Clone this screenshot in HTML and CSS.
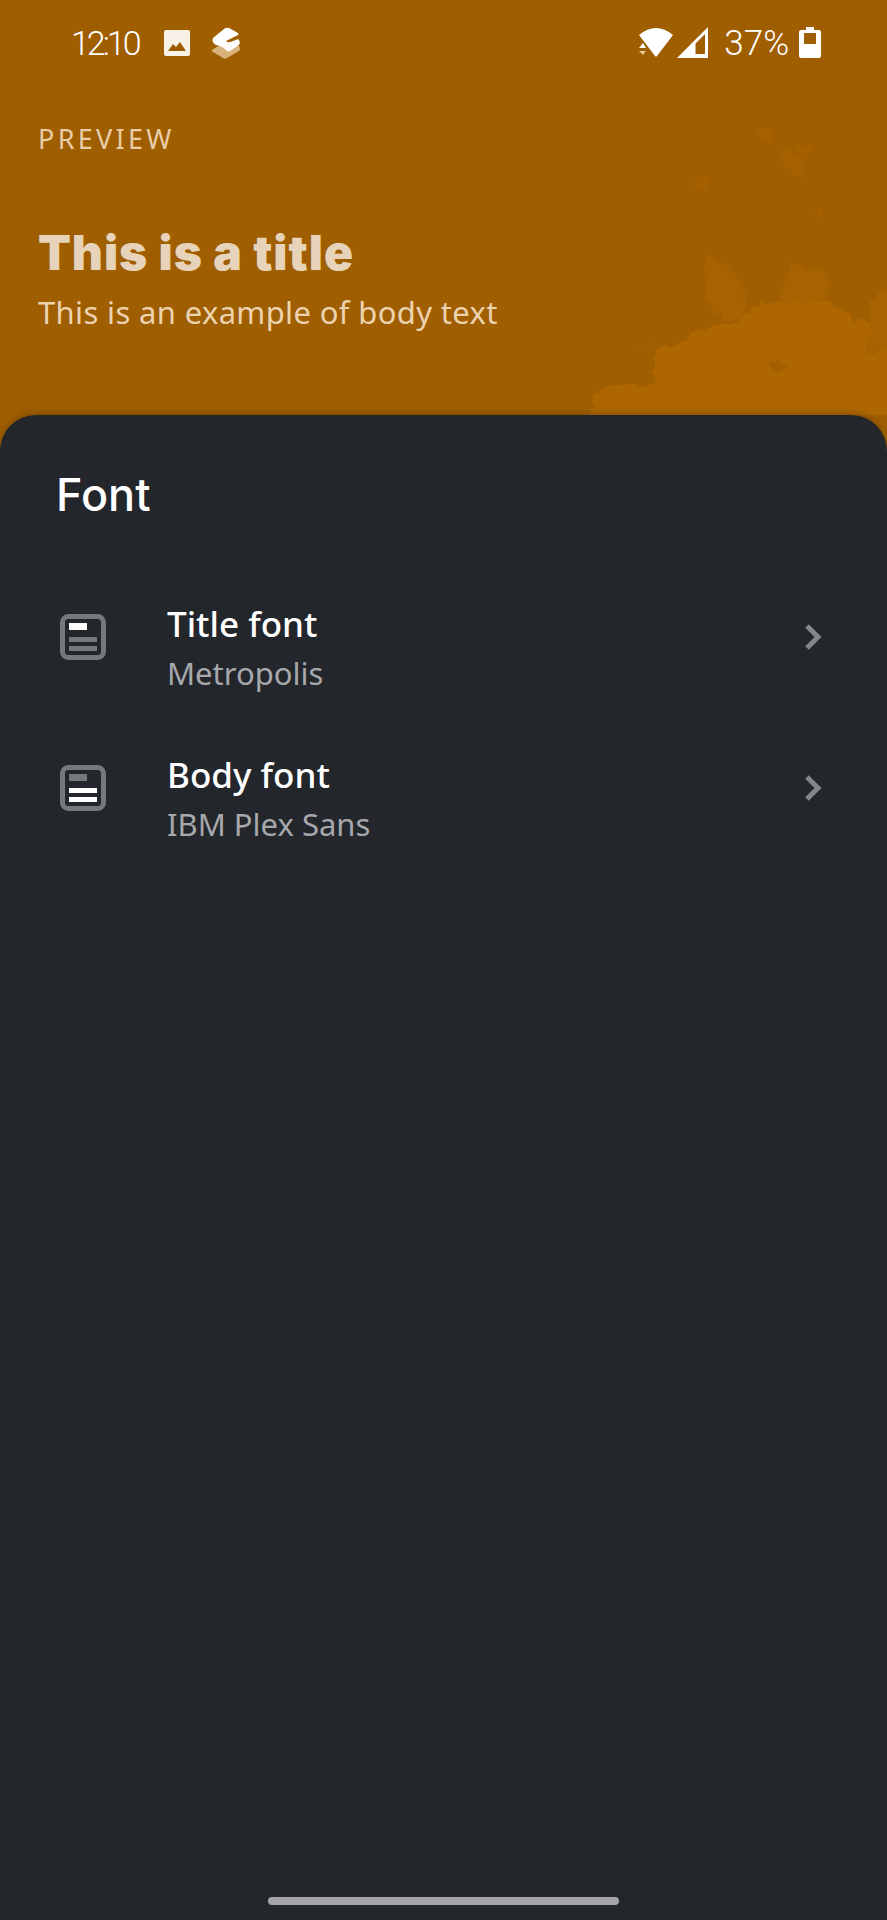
FILE: index.html
```html
<!DOCTYPE html>
<html lang="en">
<head>
    <meta charset="UTF-8">
    <meta name="viewport" content="width=device-width, initial-scale=1.0">
    <title>Font</title>
    <link rel="stylesheet" href="styles.css">
</head>
<body>

<div class="screen">
    <div class="header">
        <svg class="texture" viewBox="0 0 887 415" aria-hidden="true">
            <defs>
                <filter id="rough" x="-10%" y="-10%" width="120%" height="120%">
                    <feTurbulence type="fractalNoise" baseFrequency="0.09" numOctaves="3" seed="4"/>
                    <feDisplacementMap in="SourceGraphic" scale="14" xChannelSelector="R" yChannelSelector="G"/>
                </filter>
            </defs>
            <g filter="url(#rough)">
                <path fill="#ae6600" d="M588 420 L593 397 L615 385 L655 383 L655 350 L683 343 L693 332 L720 325 L737 325 L760 303 L793 300 L827 302 L847 313 L853 322 L873 320 L866 353 L892 347 L892 420 Z"/>
                <path fill="#a86200" d="M705 252 L722 262 L743 280 L746 320 L722 322 L708 300 Z"/>
                <path fill="#a86200" d="M793 258 L806 270 L827 273 L824 300 L780 304 L786 280 Z"/>
                <path fill="#a86200" d="M870 300 L887 285 L892 345 L866 352 L872 325 Z"/>
                <path fill="#a66100" d="M778 150 L790 148 L806 172 L800 176 L785 168 Z"/>
                <path fill="#a66100" d="M757 126 L775 128 L772 142 L760 140 Z"/>
                <path fill="#a66100" d="M798 146 L816 144 L808 158 L800 156 Z"/>
                <path fill="#a66100" d="M694 178 L708 176 L704 190 L696 188 Z"/>
                <path fill="#a66100" d="M812 208 L824 206 L820 216 L814 214 Z"/>
                <path fill="#a25f00" d="M640 345 L650 342 L648 352 L642 352 Z"/>
                <path fill="#a25f00" d="M770 364 L785 362 L780 372 L772 370 Z"/>
            </g>
        </svg>

        <div class="status-bar">
            <div class="status-left">
                <span class="clock">12:10</span>
                <svg class="icon-image" viewBox="0 0 26 26">
                    <rect width="26" height="26" rx="2" fill="#f7f1e8"/>
                    <path fill="#9c5c00" d="M4 21 L9 14 L12 17 L16 12 L22 21 Z"/>
                </svg>
                <svg class="icon-app" viewBox="0 0 30 32">
                    <path fill="#d9b27c" d="M1 23 L12 16 L28 19 Q30 22 28 24 L16 31 Q14 32 12 31 L2 25 Q0 24 1 23 Z"/>
                    <path fill="#ffffff" d="M2 11 L13 2 Q15 0 18 1 L27 6 Q28 7 27 8 L15 14 Q17 17 27 12 Q30 15 28 18 L19 24 Q17 25 15 23 Q11 19 5 18 Q0 15 2 11 Z"/>
                </svg>
            </div>
            <div class="status-right">
                <svg class="icon-wifi" viewBox="0 0 36 30">
                    <path fill="#ffffff" d="M1 7 Q18 -7 35 7 L19 28 Q18 29 17 28 Z"/>
                    <path fill="#ffffff" d="M1 20 L5 15 L8 20 Z"/>
                    <path fill="#e6c79a" d="M1 23 L8 23 L5 27 Z"/>
                </svg>
                <svg class="icon-signal" viewBox="0 0 32 32">
                    <path fill="#ffffff" fill-rule="evenodd" d="M0 31 L31 0 L31 31 Z M18.500 16.500 L18.500 27 L28 27 L28 7 Z"/>
                </svg>
                <span class="battery-text">37%</span>
                <svg class="icon-battery" viewBox="0 0 22 32">
                    <path fill="#ffffff" fill-rule="evenodd" d="M7 0 L15 0 L15 3 L20 3 Q22 3 22 5 L22 29 Q22 31 20 31 L2 31 Q0 31 0 29 L0 5 Q0 3 2 3 L7 3 Z M5 6 L5 17 L17 17 L17 6 Z"/>
                </svg>
            </div>
        </div>

        <div class="overline">PREVIEW</div>
        <div class="sample-title">This is a title</div>
        <div class="sample-body">This is an example of body text</div>
    </div>

    <div class="sheet">
        <h2 class="sheet-title">Font</h2>

        <div class="row">
            <svg class="row-icon" viewBox="0 0 48 48">
                <rect x="3.500" y="3.500" width="41" height="41" rx="6" fill="none" stroke="#77787d" stroke-width="5"/>
                <rect x="10" y="10" width="18" height="7" fill="#ffffff"/>
                <rect x="10" y="24" width="28" height="5" fill="#77787d"/>
                <rect x="10" y="33" width="28" height="5" fill="#77787d"/>
            </svg>
            <div class="row-text">
                <div class="row-label">Title font</div>
                <div class="row-value">Metropolis</div>
            </div>
            <svg class="chevron" viewBox="0 0 18 28">
                <path d="M3 3 L14 14 L3 25" fill="none" stroke="#85868a" stroke-width="5"/>
            </svg>
        </div>

        <div class="row">
            <svg class="row-icon" viewBox="0 0 48 48">
                <rect x="3.500" y="3.500" width="41" height="41" rx="6" fill="none" stroke="#77787d" stroke-width="5"/>
                <rect x="10" y="10" width="18" height="7" fill="#77787d"/>
                <rect x="10" y="24" width="28" height="5" fill="#ffffff"/>
                <rect x="10" y="33" width="28" height="5" fill="#ffffff"/>
            </svg>
            <div class="row-text">
                <div class="row-label">Body font</div>
                <div class="row-value">IBM Plex Sans</div>
            </div>
            <svg class="chevron" viewBox="0 0 18 28">
                <path d="M3 3 L14 14 L3 25" fill="none" stroke="#85868a" stroke-width="5"/>
            </svg>
        </div>

        <div class="home-bar"></div>
    </div>
</div>

</body>
</html>
```

FILE: styles.css
```css
body {
    margin: 0;
    font-family: "Noto Sans", Arial, sans-serif;
    background-color: #23262b;
}
.screen {
    width: 887px;
    height: 1920px;
    display: flex;
    flex-direction: column;
    overflow: hidden;
    background-color: #9f5e00;
}
.header {
    position: relative;
    height: 415px;
    flex-shrink: 0;
    padding-left: 38px;
    box-sizing: border-box;
    background-color: #9f5e00;
}
.texture {
    position: absolute;
    left: 0;
    top: 0;
    width: 887px;
    height: 415px;
}
.status-bar {
    position: relative;
    height: 86px;
    margin-left: -38px;
    padding: 0 66px 0 71px;
    display: flex;
    justify-content: space-between;
    align-items: center;
    color: white;
}
.status-left, .status-right {
    display: flex;
    align-items: center;
}
.clock, .battery-text {
    font-family: Roboto, Arial, sans-serif;
    font-weight: 300;
    font-size: 34px;
}
.clock {
    width: 70px;
    letter-spacing: -3px;
}
.icon-image {
    width: 26px;
    height: 26px;
    margin-left: 23px;
}
.icon-app {
    width: 30px;
    height: 32px;
    margin-left: 21px;
}
.icon-wifi {
    width: 36px;
    height: 30px;
}
.icon-signal {
    width: 32px;
    height: 32px;
    margin-left: 3px;
}
.battery-text {
    font-size: 35px;
    margin-left: 15px;
}
.icon-battery {
    width: 22px;
    height: 32px;
    margin-left: 10px;
}
.overline {
    position: relative;
    margin-top: 38px;
    font-size: 27px;
    line-height: 30px;
    letter-spacing: 3.3px;
    color: #e9cda8;
}
.sample-title {
    position: relative;
    margin-top: 71px;
    font-family: Inter, Arial, sans-serif;
    font-weight: 900;
    font-size: 48px;
    line-height: 56px;
    letter-spacing: 0.9px;
    color: #e6d3ba;
}
.sample-body {
    position: relative;
    margin-top: 12px;
    font-size: 31px;
    line-height: 38px;
    letter-spacing: 0.35px;
    color: #ecd3b0;
}
.sheet {
    position: relative;
    flex-grow: 1;
    padding: 56px 0 0;
    background-color: #23262b;
    border-radius: 36px 36px 0 0;
    box-shadow: 0 -2px 6px rgba(0, 0, 0, 0.2);
}
.sheet-title {
    margin: 0 0 52px 56px;
    font-family: Inter, Arial, sans-serif;
    font-weight: 500;
    font-size: 45px;
    line-height: 48px;
    color: white;
}
.row {
    height: 151px;
    box-sizing: border-box;
    display: flex;
    align-items: flex-start;
    padding: 31px 65px 0 59px;
}
.row-icon {
    width: 48px;
    height: 48px;
    margin-top: 11px;
}
.row-text {
    flex-grow: 1;
    margin-left: 60px;
}
.row-label {
    font-weight: 500;
    font-size: 35px;
    line-height: 44px;
    color: white;
}
.row-value {
    margin-top: 7px;
    font-size: 31px;
    line-height: 40px;
    color: #a7a8ac;
}
.chevron {
    width: 18px;
    height: 28px;
    margin-top: 21px;
}
.home-bar {
    position: absolute;
    left: 268px;
    bottom: 15px;
    width: 351px;
    height: 8px;
    border-radius: 4px;
    background-color: #a5a6a9;
}
```
